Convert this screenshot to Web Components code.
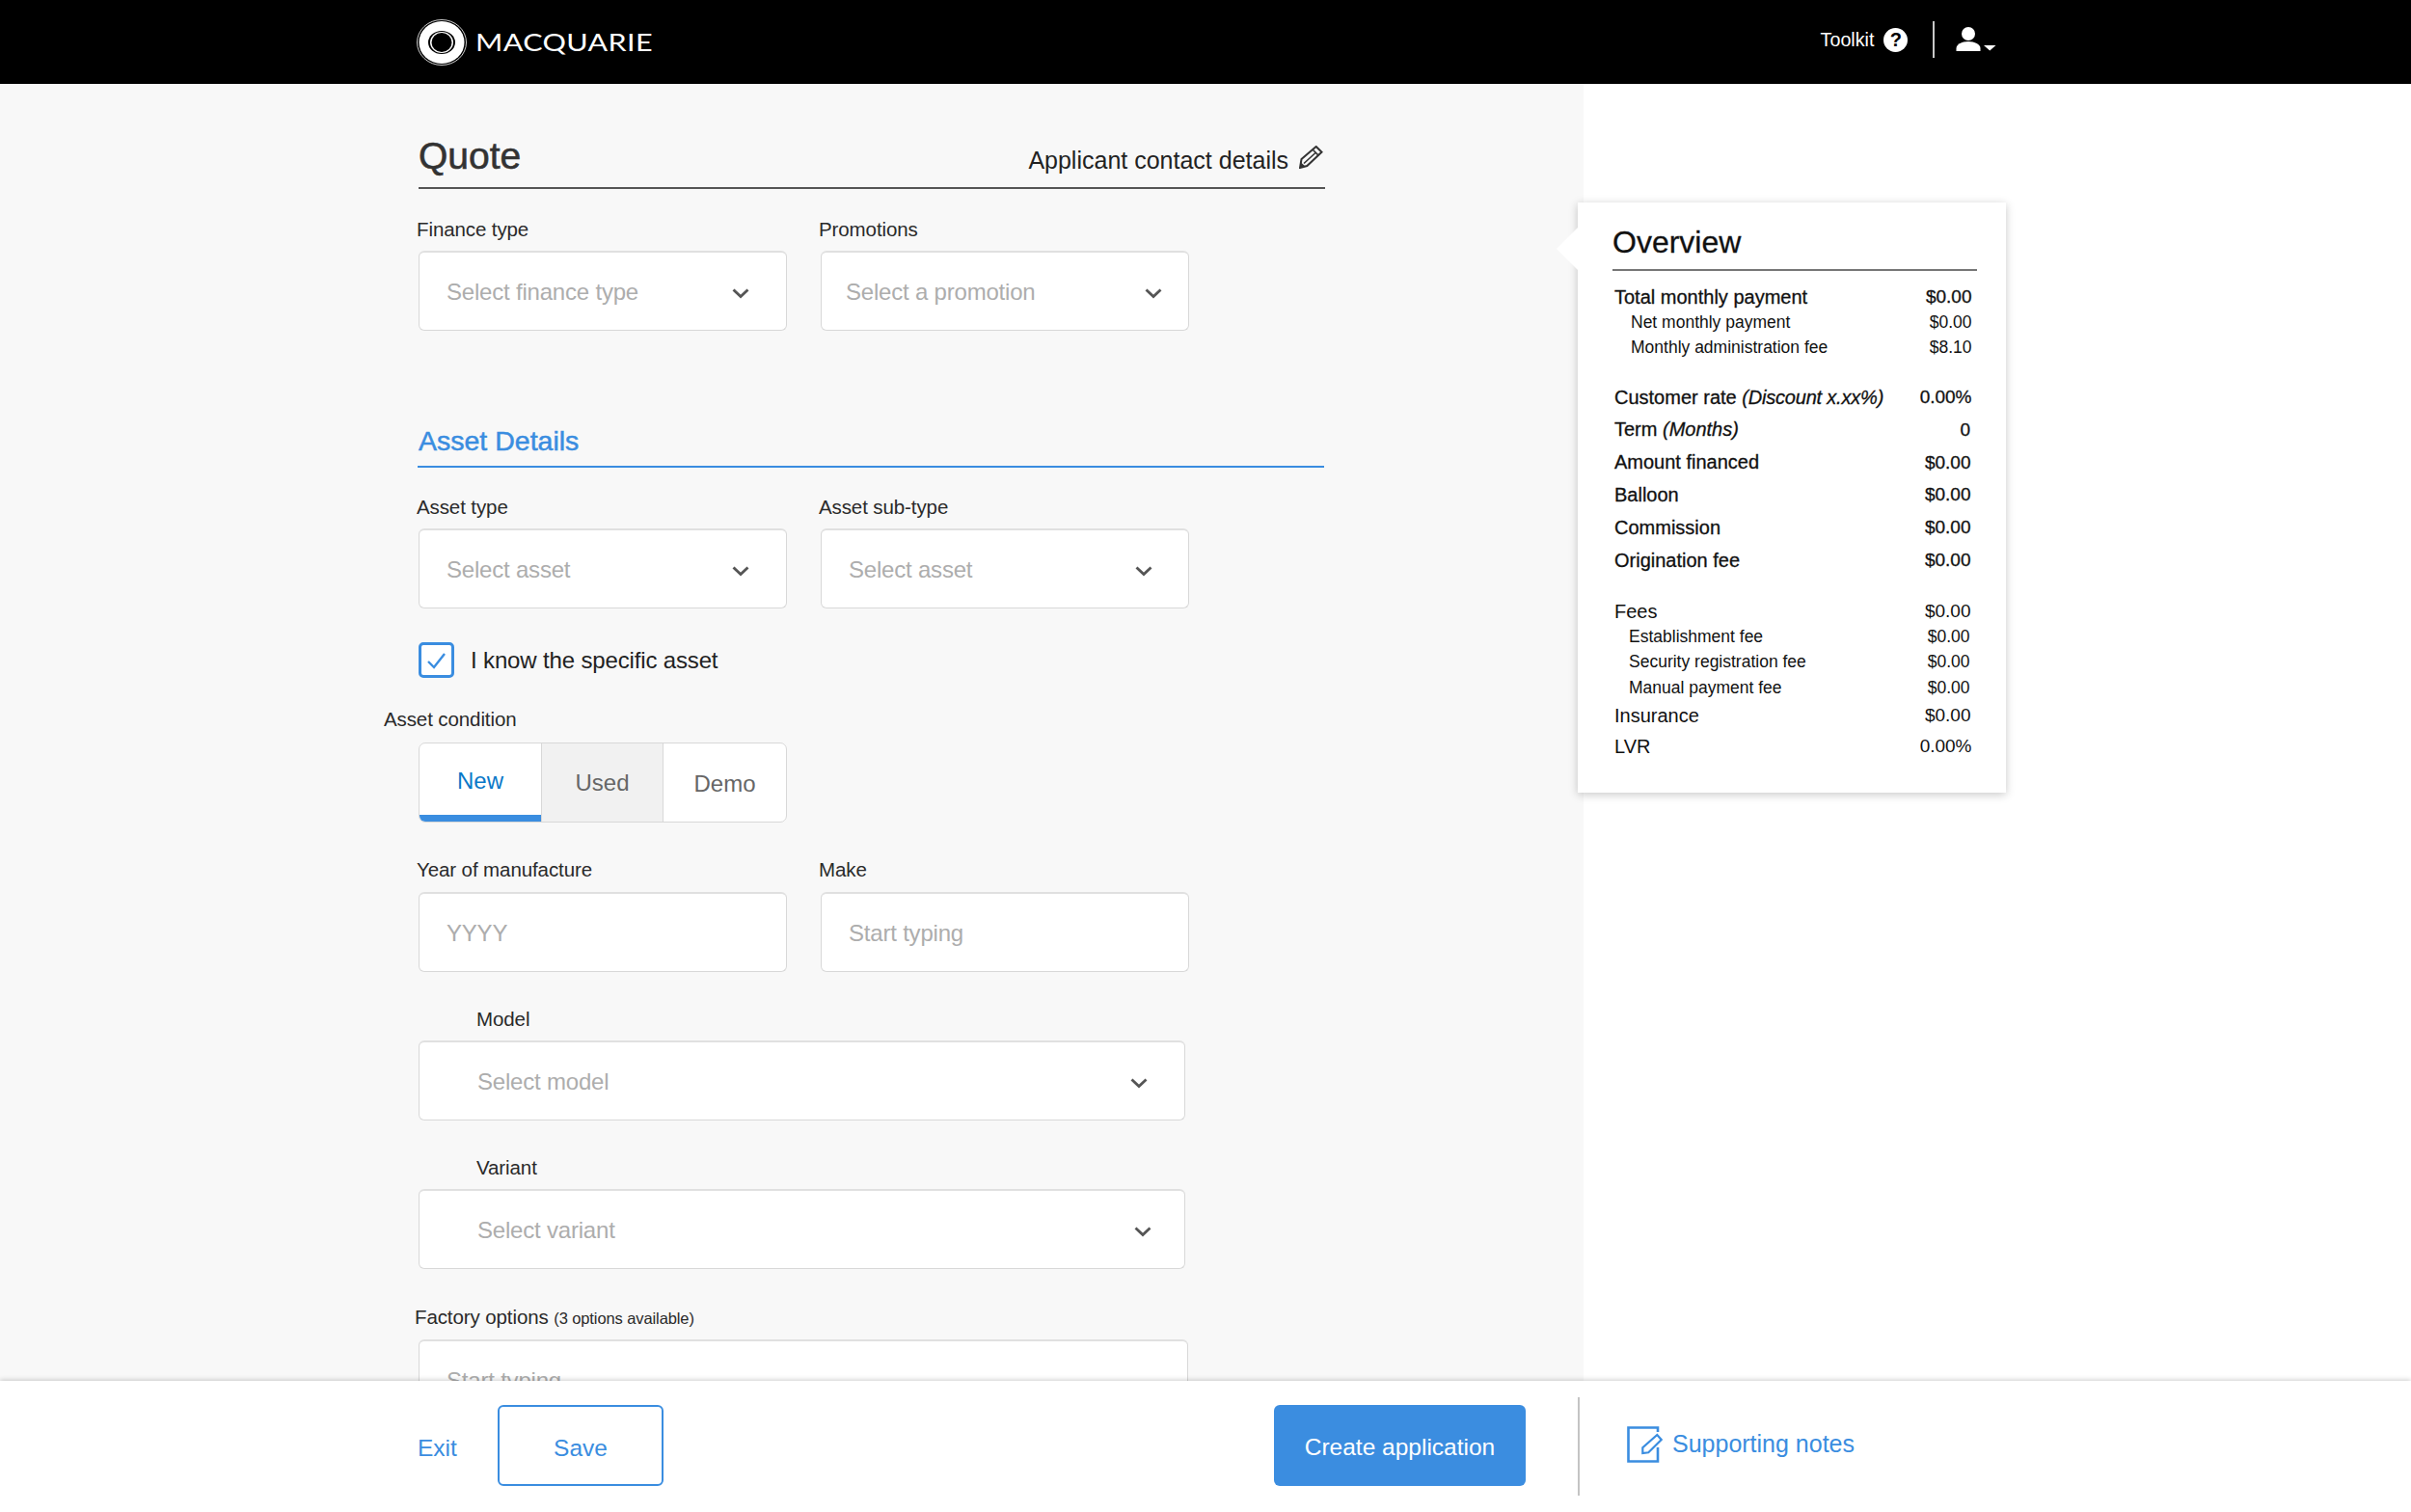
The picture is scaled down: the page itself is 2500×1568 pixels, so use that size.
<!DOCTYPE html>
<html>
<head>
<meta charset="utf-8">
<style>
  html, body { margin: 0; height: 100%; }
  body { font-family: "Liberation Sans", Arial, sans-serif; color: #222; overflow: hidden; }
  quote-app { height: 1568px; }
</style>
</head>
<body>
<quote-app>
  <top-bar slot="top"></top-bar>

  <quote-heading slot="form" link="Applicant contact details">Quote</quote-heading>
  <field-row slot="form" style="margin-top:30px">
    <form-field label="Finance type"><select-box placeholder="Select finance type" pad="28" end="38"></select-box></form-field>
    <form-field label="Promotions"><select-box placeholder="Select a promotion" pad="25" end="27"></select-box></form-field>
  </field-row>
  <section-heading slot="form">Asset Details</section-heading>
  <field-row slot="form" style="margin-top:29px">
    <form-field label="Asset type"><select-box placeholder="Select asset" pad="28" end="38"></select-box></form-field>
    <form-field label="Asset sub-type"><select-box placeholder="Select asset" pad="28" end="37"></select-box></form-field>
  </field-row>
  <check-line slot="form">I know the specific asset</check-line>
  <form-field slot="form" label="Asset condition" shift="-36" gap="12" style="margin-top:31px"><seg-control></seg-control></form-field>
  <field-row slot="form" style="margin-top:37px">
    <form-field label="Year of manufacture" gap="11"><select-box placeholder="YYYY" plain pad="28"></select-box></form-field>
    <form-field label="Make" gap="11"><select-box placeholder="Start typing" plain pad="28"></select-box></form-field>
  </field-row>
  <form-field slot="form" label="Model" shift="60" wide style="margin-top:37px"><select-box placeholder="Select model" pad="60" end="38"></select-box></form-field>
  <form-field slot="form" label="Variant" shift="60" gap="10" wide style="margin-top:37px"><select-box placeholder="Select variant" pad="60" end="34.5"></select-box></form-field>
  <form-field slot="form" label="Factory options" note="(3 options available)" shift="-4" gap="10" style="margin-top:38px;width:798px"><select-box placeholder="Start typing" plain pad="28"></select-box></form-field>

  <overview-card slot="side"></overview-card>
  <bottom-bar slot="bottom"></bottom-bar>
</quote-app>

<script>
const BLUE = '#3a8de0';
const CHEVRON = '<svg width="18" height="11" viewBox="0 0 18 11"><path d="M1.5 1.5L9 8.500l7.500-7" fill="none" stroke="#555" stroke-width="2.800"/></svg>';

class QuoteApp extends HTMLElement {
  constructor() {
    super();
    this.attachShadow({ mode: 'open' });
    this.shadowRoot.innerHTML = `
      <style>
        :host { display: flex; flex-direction: column; background: #fff; }
        .middle { flex: 1; display: flex; min-height: 0; overflow: hidden; }
        .panel { width: 1642px; flex: none; background: #f8f8f8; padding: 51px 0 0 434px; box-sizing: border-box; overflow: hidden; }
        .column { width: 940px; }
        .side { flex: 1; padding-top: 123px; margin-left: -6px; }
      </style>
      <slot name="top"></slot>
      <div class="middle">
        <div class="panel"><div class="column"><slot name="form"></slot></div></div>
        <div class="side"><slot name="side"></slot></div>
      </div>
      <slot name="bottom"></slot>`;
  }
}

class TopBar extends HTMLElement {
  constructor() {
    super();
    this.attachShadow({ mode: 'open' });
    this.shadowRoot.innerHTML = `
      <style>
        :host { display: flex; align-items: center; flex: none; height: 87px; background: #000; color: #fff; padding: 0 430px 0 432px; box-sizing: border-box; }
        .word { font: 400 25px Lato, "Liberation Sans", sans-serif; margin: -2px 0 0 9px; display: inline-block; transform: scaleX(1.22); transform-origin: left; letter-spacing: .3px; }
        .spacer { flex: 1; }
        .tool { font-size: 19.700px; margin: -4px 10px 0 0; }
        .help { width: 25px; height: 25px; margin-top: -4px; border-radius: 50%; background: #fff; color: #000; font: bold 20px/25px "Liberation Sans", sans-serif; text-align: center; }
        .sep { width: 2px; height: 38px; background: #c8c8c8; margin: -6px 22px 0 25.600px; }
        svg { display: block; }
        .user { margin-top: -5px; }
      </style>
      <svg width="52" height="48" viewBox="0 0 52 48">
        <ellipse cx="26" cy="24" rx="25.500" ry="23.500" fill="none" stroke="#fff" stroke-width=".8"/>
        <ellipse cx="26" cy="24" rx="23.500" ry="22" fill="#fff"/>
        <ellipse cx="26" cy="24" rx="14" ry="12" fill="#000"/>
        <ellipse cx="26" cy="24" rx="12" ry="11" fill="#fff"/>
        <ellipse cx="26" cy="24" rx="10.500" ry="10" fill="#000"/>
      </svg>
      <span class="word">MACQUARIE</span>
      <span class="spacer"></span>
      <span class="tool">Toolkit</span>
      <span class="help">?</span>
      <span class="sep"></span>
      <svg class="user" width="42" height="26" viewBox="0 0 42 26">
        <circle cx="13" cy="7" r="7" fill="#fff"/>
        <path d="M.5 25v-3c0-4 6-7 12.500-7s12.500 3 12.500 7v3z" fill="#fff"/>
        <path d="M29 19h12.500l-6.250 5.500z" fill="#fff"/>
      </svg>`;
  }
}

class QuoteHeading extends HTMLElement {
  constructor() {
    super();
    this.attachShadow({ mode: 'open' });
    this.shadowRoot.innerHTML = `
      <style>
        :host { display: flex; align-items: baseline; justify-content: space-between; box-sizing: border-box; height: 58px; border-bottom: 2px solid #555; }
        h1 { margin: 0; font: normal 39px/48px "Liberation Sans", sans-serif; color: #333; -webkit-text-stroke: .6px #333; }
        .link { display: flex; align-items: baseline; font-size: 25px; color: #222; margin-right: 2px; }
        svg { margin-left: 11px; }
      </style>
      <h1><slot></slot></h1>
      <span class="link">${this.getAttribute('link')}
        <svg width="25" height="24" viewBox="0 0 25 24">
          <path d="M17.700 1L23.500 6.700 8.300 21 1 23l1.500-9z" fill="none" stroke="#333" stroke-width="2"/>
          <path d="M14.500 4.500l5.600 5.600M17 7.500L5 18.500" fill="none" stroke="#333" stroke-width="1.600"/>
          <path d="M1 23l1-5.500 4.500 4z" fill="#333"/>
        </svg>
      </span>`;
  }
}

class SectionHeading extends HTMLElement {
  constructor() {
    super();
    this.attachShadow({ mode: 'open' });
    this.shadowRoot.innerHTML = `
      <style>
        :host { display: block; box-sizing: border-box; height: 50px; margin: 92px 1px 0 -1px; padding-left: 1px; border-bottom: 2px solid ${BLUE}; color: ${BLUE}; font-size: 28.500px; line-height: 44px; -webkit-text-stroke: .5px ${BLUE}; }
      </style>
      <slot></slot>`;
  }
}

class FieldRow extends HTMLElement {
  constructor() {
    super();
    this.attachShadow({ mode: 'open' });
    this.shadowRoot.innerHTML = `
      <style>:host { display: flex; gap: 35px; }</style>
      <slot></slot>`;
  }
}

class FormField extends HTMLElement {
  constructor() {
    super();
    this.attachShadow({ mode: 'open' });
    const note = this.getAttribute('note');
    const shift = this.getAttribute('shift') || '-2';
    const gap = this.getAttribute('gap') || '10';
    this.shadowRoot.innerHTML = `
      <style>
        :host { display: block; width: ${this.hasAttribute('wide') ? '795px' : '382px'}; }
        label { display: block; font-size: 20.500px; line-height: 24px; margin: 0 0 ${gap}px ${shift}px; color: #2a2a2a; letter-spacing: -.1px; }
        small { font-size: 16.500px; }
      </style>
      <label>${this.getAttribute('label')}${note ? ` <small>${note}</small>` : ''}</label>
      <slot></slot>`;
  }
}

class SelectBox extends HTMLElement {
  constructor() {
    super();
    this.attachShadow({ mode: 'open' });
    const pad = this.getAttribute('pad') || '30';
    const end = this.getAttribute('end') || '26';
    const chevron = this.hasAttribute('plain') ? '' : CHEVRON;
    this.shadowRoot.innerHTML = `
      <style>
        :host { display: flex; align-items: center; justify-content: space-between; height: 83px; box-sizing: border-box; background: #fff; border: 1px solid #d8d8d8; border-top: 2px solid #e0e0e0; border-radius: 6px; padding: 0 ${end}px 0 ${pad}px; }
        span { font-size: 24px; color: #adadad; letter-spacing: -.2px; margin-top: 1px; }
        svg { display: block; margin-top: 5px; }
      </style>
      <span>${this.getAttribute('placeholder')}</span>${chevron}`;
  }
}

class CheckLine extends HTMLElement {
  constructor() {
    super();
    this.attachShadow({ mode: 'open' });
    this.shadowRoot.innerHTML = `
      <style>
        :host { display: flex; align-items: center; gap: 17px; margin-top: 35px; font-size: 24px; letter-spacing: -.15px; color: #222; }
        .box { width: 37px; height: 37px; box-sizing: border-box; border: 3px solid ${BLUE}; border-radius: 5px; background: #fff; display: flex; align-items: center; justify-content: center; }
      </style>
      <span class="box"><svg width="21" height="18" viewBox="0 0 21 18"><path d="M2 10l6 6L19 2" fill="none" stroke="${BLUE}" stroke-width="2.400"/></svg></span>
      <span><slot></slot></span>`;
  }
}

class SegControl extends HTMLElement {
  constructor() {
    super();
    this.attachShadow({ mode: 'open' });
    this.shadowRoot.innerHTML = `
      <style>
        :host { display: flex; width: 382px; height: 83px; box-sizing: border-box; border: 1px solid #d8d8d8; border-radius: 7px; overflow: hidden; background: #fff; }
        div { display: flex; align-items: center; justify-content: center; font-size: 24px; color: #666; box-sizing: border-box; border-left: 1px solid #d8d8d8; }
        .new { width: 126px; border-left: 0; color: #0a78c8; border-bottom: 7px solid ${BLUE}; padding-top: 4px; }
        .used { width: 126px; background: #f1f1f1; }
        .demo { flex: 1; padding-top: 3px; }
      </style>
      <div class="new">New</div><div class="used">Used</div><div class="demo">Demo</div>`;
  }
}

class OverviewRow extends HTMLElement {
  constructor() {
    super();
    this.attachShadow({ mode: 'open' });
    const kind = this.getAttribute('kind') || 'main';
    const h = this.getAttribute('h') || (kind === 'main' ? 33.8 : 26.4);
    this.shadowRoot.innerHTML = `
      <style>
        :host { display: flex; justify-content: space-between; align-items: center; height: ${h}px; padding-right: ${this.getAttribute('end') || 3.5}px; color: #111; }
        :host([kind="main"]) { font-size: 20px; -webkit-text-stroke: .3px #111; }
        :host([kind="plain"]) { font-size: 20px; }
        :host([kind="sub"]) { font-size: 17.500px; padding-left: ${this.getAttribute('indent') || 17}px; }
        :host([kind="main"]) .val, :host([kind="plain"]) .val { font-size: 19px; }
      </style>
      <span><slot></slot></span><span class="val">${this.getAttribute('value')}</span>`;
  }
}

class OverviewCard extends HTMLElement {
  constructor() {
    super();
    this.attachShadow({ mode: 'open' });
    this.shadowRoot.innerHTML = `
      <style>
        :host { display: block; position: relative; width: 444px; height: 612px; box-sizing: border-box; background: #fff; box-shadow: 0 2px 9px rgba(0,0,0,.22); padding: 20px 32px 0 38px; }
        h2 { margin: 0 -2px 0 -2px; box-sizing: border-box; font: normal 32px/42px "Liberation Sans", sans-serif; color: #111; height: 51px; border-bottom: 2px solid #777; -webkit-text-stroke: .3px #111; }
        .rows { margin-top: 14px; }
        .arrow { position: absolute; left: -22px; top: 25px; }
      </style>
      <svg class="arrow" width="23" height="46" viewBox="0 0 23 46"><path d="M23 0L0 23l23 23z" fill="#fff"/></svg>
      <h2>Overview</h2>
      <div class="rows"><slot></slot></div>`;
    this.innerHTML = `
      <overview-row kind="main" h="26.4" value="$0.00">Total monthly payment</overview-row>
      <overview-row kind="sub" value="$0.00">Net monthly payment</overview-row>
      <overview-row kind="sub" value="$8.10">Monthly administration fee</overview-row>
      <overview-row kind="main" style="margin-top:21px" value="0.00%">Customer rate&nbsp;<i style="letter-spacing:-.2px">(Discount x.xx%)</i></overview-row>
      <overview-row kind="main" end="5" value="0">Term&nbsp;<i>(Months)</i></overview-row>
      <overview-row kind="main" end="4.5" value="$0.00">Amount financed</overview-row>
      <overview-row kind="main" end="4.5" value="$0.00">Balloon</overview-row>
      <overview-row kind="main" end="4.5" value="$0.00">Commission</overview-row>
      <overview-row kind="main" end="4.5" value="$0.00">Origination fee</overview-row>
      <overview-row kind="plain" style="margin-top:23px" end="4.5" h="26.4" value="$0.00">Fees</overview-row>
      <overview-row kind="sub" indent="15" end="5.5" value="$0.00">Establishment fee</overview-row>
      <overview-row kind="sub" indent="15" end="5.5" value="$0.00">Security registration fee</overview-row>
      <overview-row kind="sub" indent="15" end="5.5" value="$0.00">Manual payment fee</overview-row>
      <overview-row kind="plain" end="4.5" h="31.5" value="$0.00">Insurance</overview-row>
      <overview-row kind="plain" end="3.5" h="32" value="0.00%">LVR</overview-row>`;
  }
}

class BottomBar extends HTMLElement {
  constructor() {
    super();
    this.attachShadow({ mode: 'open' });
    this.shadowRoot.innerHTML = `
      <style>
        :host { display: flex; align-items: center; flex: none; height: 136px; box-sizing: border-box; background: #fff; box-shadow: 0 -1px 5px rgba(0,0,0,.2); position: relative; padding-left: 433px; font-size: 24.500px; color: ${BLUE}; }
        .exit { width: 83px; margin-top: 4px; }
        .btn { display: flex; align-items: center; justify-content: center; height: 84px; box-sizing: border-box; border-radius: 6px; margin-top: -3px; }
        .save { width: 172px; border: 2px solid ${BLUE}; padding-top: 6px; }
        .create { width: 261px; margin-left: 633px; background: #3b8de0; color: #fff; padding-top: 4px; }
        .sep { width: 2px; height: 102px; background: #c4c4c4; margin: -1px 0 0 54px; }
        .notes { display: flex; align-items: center; margin: -5px 0 0 49px; gap: 10px; font-size: 25px; }
        svg { display: block; }
      </style>
      <span class="exit">Exit</span>
      <span class="btn save">Save</span>
      <span class="btn create">Create application</span>
      <span class="sep"></span>
      <span class="notes">
        <svg width="37" height="38" viewBox="0 0 37 38">
          <path d="M32 6V1.500H1.500v35H32V22" fill="none" stroke="${BLUE}" stroke-width="2.600"/>
          <path d="M16.300 28v-5.700L31.300 9l4.400 5-13.400 13.300z" fill="none" stroke="${BLUE}" stroke-width="2.200"/>
        </svg>
        Supporting notes
      </span>`;
  }
}

customElements.define('overview-row', OverviewRow);
customElements.define('quote-app', QuoteApp);
customElements.define('top-bar', TopBar);
customElements.define('quote-heading', QuoteHeading);
customElements.define('section-heading', SectionHeading);
customElements.define('field-row', FieldRow);
customElements.define('form-field', FormField);
customElements.define('select-box', SelectBox);
customElements.define('check-line', CheckLine);
customElements.define('seg-control', SegControl);
customElements.define('overview-card', OverviewCard);
customElements.define('bottom-bar', BottomBar);
</script>
</body>
</html>
